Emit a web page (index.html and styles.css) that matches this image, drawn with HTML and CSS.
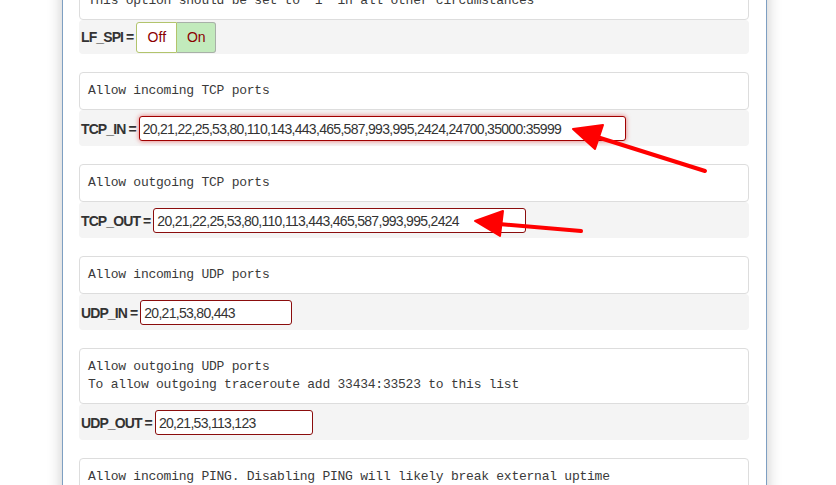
FILE: index.html
```html
<!DOCTYPE html>
<html lang="en">
<head>
    <meta charset="UTF-8">
    <meta name="viewport" content="width=device-width, initial-scale=1.0">
    <title>Firewall Configuration</title>
    <link rel="stylesheet" href="styles.css">
</head>
<body>
    <div class="panel">
        <div class="option">
            <div class="desc">This option should be set to "1" in all other circumstances</div>
            <div class="row row-switch">
                <span class="name">LF_SPI =</span>
                <span class="switch">
                    <span class="switch-off">Off</span>
                    <span class="switch-on">On</span>
                </span>
            </div>
        </div>

        <div class="option">
            <div class="desc">Allow incoming TCP ports</div>
            <div class="row">
                <span class="name">TCP_IN =</span>
                <input type="text" class="field focused" style="width: 487px;" value="20,21,22,25,53,80,110,143,443,465,587,993,995,2424,24700,35000:35999">
            </div>
        </div>

        <div class="option">
            <div class="desc">Allow outgoing TCP ports</div>
            <div class="row">
                <span class="name">TCP_OUT =</span>
                <input type="text" class="field" style="width: 373px;" value="20,21,22,25,53,80,110,113,443,465,587,993,995,2424">
            </div>
        </div>

        <div class="option">
            <div class="desc">Allow incoming UDP ports</div>
            <div class="row">
                <span class="name">UDP_IN =</span>
                <input type="text" class="field" style="width: 152px;" value="20,21,53,80,443">
            </div>
        </div>

        <div class="option">
            <div class="desc">Allow outgoing UDP ports
To allow outgoing traceroute add 33434:33523 to this list</div>
            <div class="row">
                <span class="name">UDP_OUT =</span>
                <input type="text" class="field" style="width: 158px;" value="20,21,53,113,123">
            </div>
        </div>

        <div class="option">
            <div class="desc">Allow incoming PING. Disabling PING will likely break external uptime
monitoring</div>
            <div class="row">
                <span class="name">ICMP_IN =</span>
                <span class="switch">
                    <span class="switch-off">Off</span>
                    <span class="switch-on">On</span>
                </span>
            </div>
        </div>
    </div>

    <!-- Callout arrows -->
    <svg class="arrows" width="836" height="485" viewBox="0 0 836 485">
        <g fill="#ff0000" stroke="#ff0000" stroke-linecap="round" stroke-linejoin="round">
            <line x1="597" y1="137" x2="705" y2="171" stroke-width="4"/>
            <polygon points="573,129 603,125 595,149" stroke-width="2"/>
            <line x1="499" y1="224" x2="581" y2="231" stroke-width="4"/>
            <polygon points="475,221 503,211 500,236" stroke-width="2"/>
        </g>
    </svg>
</body>
</html>
```

FILE: styles.css
```css
/* Global Styles */
html, body {
    margin: 0;
    padding: 0;
    overflow: hidden;
    background: #ffffff;
}

body {
    position: relative;
    height: 485px;
    font-family: 'Liberation Sans', Arial, sans-serif;
    color: #333;
}

/* Settings panel */
.panel {
    box-sizing: border-box;
    width: 705px;
    margin: -18px 0 0 62px;
    padding: 0 17px 0 16px;
    background: #ffffff;
    border-left: 1px solid #7e9fc2;
    border-right: 1px solid #7e9fc2;
    box-shadow: 0 0 14px rgba(0, 0, 0, 0.22);
}

.option {
    margin-bottom: 18px;
}

/* Help text above each setting */
.desc {
    background: #ffffff;
    border: 1px solid #dddddd;
    border-radius: 4px;
    padding: 9px 8px;
    font-family: 'Liberation Mono', 'Courier New', monospace;
    font-size: 13px;
    letter-spacing: -0.24px;
    line-height: 18px;
    color: #3a3a3a;
    white-space: pre;
}

/* Setting row */
.row {
    display: flex;
    align-items: center;
    gap: 3px;
    height: 36px;
    padding: 1px 2px 0;
    box-sizing: border-box;
    background: #f4f4f4;
    border-radius: 4px;
}

.row-switch {
    height: 34px;
    gap: 3px;
    padding-top: 0;
}

.name {
    font-size: 14px;
    font-weight: bold;
    letter-spacing: -0.9px;
    color: #333;
    white-space: nowrap;
}

/* Text inputs */
.field {
    box-sizing: border-box;
    height: 25px;
    padding: 0 3px;
    border: 1px solid #8b0d0d;
    border-radius: 3px;
    background: #ffffff;
    font-family: 'Liberation Sans', Arial, sans-serif;
    font-size: 14px;
    letter-spacing: -0.7px;
    color: #333;
    outline: none;
}

.field.focused {
    border-color: #a00000;
    box-shadow: 0 0 5px rgba(220, 0, 0, 0.55);
}

/* On/Off switch */
.switch {
    display: flex;
    height: 31px;
    font-size: 14px;
    color: #8b0000;
}

.switch-off,
.switch-on {
    display: flex;
    align-items: center;
    justify-content: center;
    box-sizing: border-box;
    height: 100%;
}

.switch-off {
    width: 41px;
    background: #ffffff;
    border: 1px solid #b2c46c;
    border-radius: 3px 0 0 3px;
}

.switch-on {
    width: 39px;
    background: #c2eabc;
    border: 1px solid #a8b0a8;
    border-left: none;
    border-radius: 0 3px 3px 0;
}

/* Overlay arrows */
.arrows {
    position: absolute;
    top: 0;
    left: 0;
    pointer-events: none;
}
```
